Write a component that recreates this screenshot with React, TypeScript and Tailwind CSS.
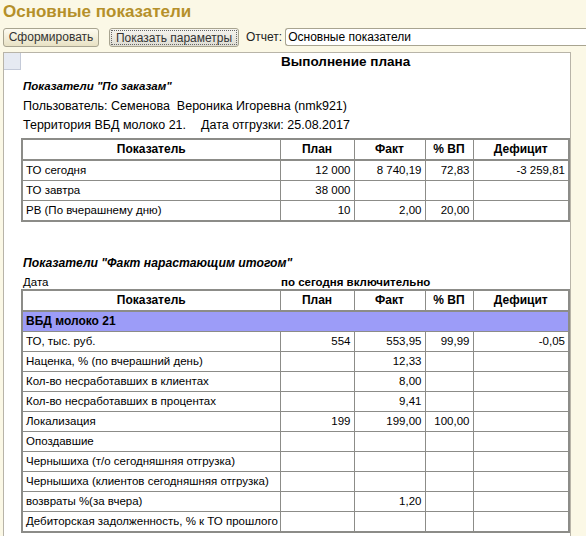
import React from "react";

type Row = { name: string; plan?: string; fact?: string; pct?: string; def?: string };

const ordersRows: Row[] = [
  { name: "ТО сегодня", plan: "12 000", fact: "8 740,19", pct: "72,83", def: "-3 259,81" },
  { name: "ТО завтра", plan: "38 000" },
  { name: "РВ (По вчерашнему дню)", plan: "10", fact: "2,00", pct: "20,00" },
];

const totalRows: Row[] = [
  { name: "ТО, тыс. руб.", plan: "554", fact: "553,95", pct: "99,99", def: "-0,05" },
  { name: "Наценка, % (по вчерашний день)", fact: "12,33" },
  { name: "Кол-во несработавших в клиентах", fact: "8,00" },
  { name: "Кол-во несработавших в процентах", fact: "9,41" },
  { name: "Локализация", plan: "199", fact: "199,00", pct: "100,00" },
  { name: "Опоздавшие" },
  { name: "Чернышиха (т/о сегодняшняя отгрузка)" },
  { name: "Чернышиха (клиентов сегодняшняя отгрузка)" },
  { name: "возвраты %(за вчера)", fact: "1,20" },
  { name: "Дебиторская задолженность, % к ТО прошлого" },
];

const cell = "border border-[#8c8c88] h-[20px] px-[3px] py-0 leading-[19px] whitespace-nowrap overflow-hidden";
const num = `${cell} text-right`;
const head = "border border-[#8c8c88] border-b-2 h-[21px] py-0 text-center font-bold text-[12px] leading-[19px]";

function Cols() {
  return (
    <colgroup>
      <col className="w-[258px]" />
      <col className="w-[74px]" />
      <col className="w-[71px]" />
      <col className="w-[48px]" />
      <col className="w-[96px]" />
    </colgroup>
  );
}

function Head() {
  return (
    <thead>
      <tr>
        <th className={head}>Показатель</th>
        <th className={head}>План</th>
        <th className={head}>Факт</th>
        <th className={head}>% ВП</th>
        <th className={head}>Дефицит</th>
      </tr>
    </thead>
  );
}

function Body({ rows }: { rows: Row[] }) {
  return (
    <>
      {rows.map((r) => (
        <tr key={r.name}>
          <td className={cell}>{r.name}</td>
          <td className={num}>{r.plan}</td>
          <td className={num}>{r.fact}</td>
          <td className={num}>{r.pct}</td>
          <td className={num}>{r.def}</td>
        </tr>
      ))}
    </>
  );
}

export default function App() {
  const font = { fontFamily: '"Liberation Sans", Arial, sans-serif' };
  return (
    <div style={font} className="w-[586px] h-[536px] overflow-hidden bg-[#fbf8e6] flex flex-col text-black">
      <div className="pl-[3px] pt-[1px] h-[27px] text-[17px] font-bold text-[#b5902a] leading-[22px]">
        Основные показатели
      </div>
      <div className="flex items-center h-[20px] pl-[3px] text-[12px]">
        <button className="h-[19px] w-[96px] rounded-[3px] border border-[#a8a490] bg-gradient-to-b from-[#fdfbf0] to-[#e8e1c4] text-[12px] leading-[16px] text-[#333]">
          Сформировать
        </button>
        <button className="ml-[10px] h-[19px] w-[130px] rounded-[3px] border border-[#a8a490] bg-gradient-to-b from-[#f6f5f0] to-[#dedcd2] p-[1px] text-[12px] text-[#333]">
          <span className="block h-full border border-dotted border-[#666] leading-[14px]">Показать параметры</span>
        </button>
        <span className="ml-[7px] text-[#222]">Отчет:</span>
        <div className="ml-[3px] flex-1 h-[18px] rounded-l-[3px] border border-r-0 border-[#a8a490] bg-white pl-[2px] leading-[16px] text-[12px]">
          Основные показатели
        </div>
      </div>
      <div className="mt-[5px] ml-[3px] w-[568px] flex-1 relative bg-white border-l border-t border-r border-[#b8b4a8]">
        <div className="absolute left-0 top-0 w-[17px] h-[17px] bg-[#e6eaf2] border-r border-b border-[#c4cad8]" />
        <div className="pl-[277px] pt-[1px] text-[13.5px] font-bold leading-[16px]">Выполнение плана</div>
        <div className="pl-[19px]">
          <div className="mt-[9px] text-[11.5px] font-bold italic leading-[15px]">Показатели "По заказам"</div>
          <div className="mt-[4px] text-[12.5px] leading-[16px]">
            Пользователь: Семенова&nbsp; Вероника Игоревна (nmk921)
          </div>
          <div className="mt-[3px] flex text-[12.5px] leading-[16px]">
            <span className="w-[178px]">Территория ВБД молоко 21.</span>
            <span>Дата отгрузки: 25.08.2017</span>
          </div>
        </div>
        <table className="mt-[5px] ml-[17px] table-fixed border-collapse border-2 border-[#8c8c88] w-[547px] text-[11.5px]">
          <Cols />
          <Head />
          <tbody>
            <Body rows={ordersRows} />
          </tbody>
        </table>
        <div className="pl-[19px] mt-[33px] text-[12.2px] font-bold italic leading-[16px]">
          Показатели "Факт нарастающим итогом"
        </div>
        <div className="flex pl-[19px] mt-[4px] text-[11.5px] leading-[14px]">
          <span className="w-[258px]">Дата</span>
          <span className="font-bold">по сегодня включительно</span>
        </div>
        <table className="ml-[17px] table-fixed border-collapse border-2 border-[#8c8c88] w-[547px] text-[11.5px]">
          <Cols />
          <Head />
          <tbody>
            <tr>
              <td colSpan={5} className="border border-[#8c8c88] h-[20px] px-[3px] py-0 bg-[#9c9cf8] font-bold text-[12px] leading-[19px]">
                ВБД молоко 21
              </td>
            </tr>
            <Body rows={totalRows} />
          </tbody>
        </table>
      </div>
    </div>
  );
}
